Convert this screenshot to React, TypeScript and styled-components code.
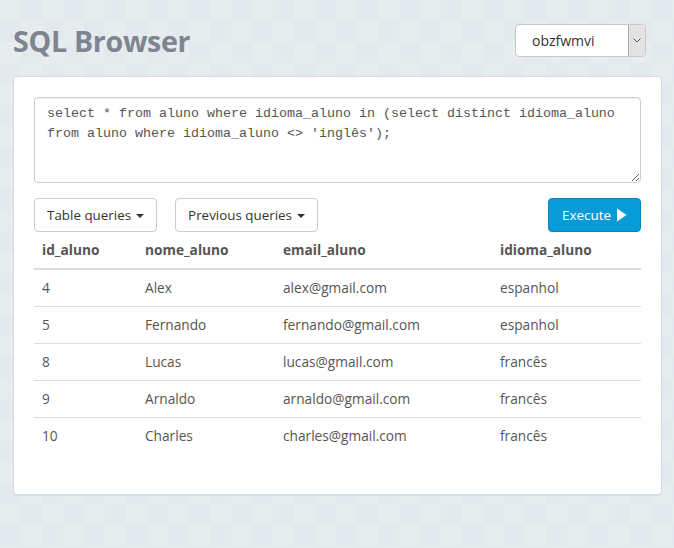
import React from "react";
import styled, { createGlobalStyle } from "styled-components";

const GlobalStyle = createGlobalStyle`
  html, body { margin: 0; padding: 0; }
  body {
    font-family: "Open Sans", "Noto Sans", sans-serif;
    font-size: 14px;
    color: #555;
    background-color: #e5eaed;
    background-image:
      repeating-conic-gradient(#e3e9ec 0 25%, #e7ecef 0 50%);
    background-size: 42px 42px;
    min-height: 548px;
  }
  * { box-sizing: border-box; }
`;

const Page = styled.div`
  padding: 0 12px 54px 13px;
`;

const Header = styled.header`
  display: flex;
  align-items: center;
  justify-content: space-between;
  padding-top: 24px;
  height: 57px;
  margin-bottom: 19px;
  padding-right: 16px;
`;

const Title = styled.h1`
  margin: 0;
  font-size: 28.6px;
  font-weight: 700;
  color: #7e8591;
  letter-spacing: -0.3px;
  line-height: 33px;
`;

const SelectWrap = styled.div`
  position: relative;
  width: 131px;
  height: 33px;
  display: flex;
  background: #fff;
  border: 1px solid #c8c8c8;
  border-radius: 4px;
  overflow: hidden;
`;

const SelectBox = styled.select`
  appearance: none;
  flex: 1;
  border: 0;
  background: transparent;
  font-family: "Open Sans", "Noto Sans", sans-serif;
  font-size: 14px;
  color: #333;
  padding: 0 0 0 16px;
  outline: none;
`;

const SelectArrow = styled.div`
  width: 17px;
  background: #e3e3e3;
  border-left: 1px solid #aaa;
  display: flex;
  align-items: center;
  justify-content: center;
  color: #555;
`;

const Panel = styled.main`
  background: #fff;
  border: 1px solid #d6dee4;
  border-radius: 4px;
  box-shadow: 0 1px 1px rgba(60, 90, 120, 0.08);
  padding: 20px 20px 40px;
`;

const QueryInput = styled.textarea`
  display: block;
  width: 100%;
  height: 86px;
  border: 1px solid #ccc;
  border-radius: 4px;
  padding: 6px 12px;
  font-family: "Liberation Mono", "DejaVu Sans Mono", monospace;
  font-size: 13.33px;
  line-height: 20px;
  color: #555;
  box-shadow: inset 0 1px 1px rgba(0, 0, 0, 0.05);
  outline: none;
  resize: both;
`;

const Toolbar = styled.div`
  display: flex;
  align-items: center;
  gap: 18px;
  margin-top: 15px;
`;

const Button = styled.button<{ $primary?: boolean }>`
  height: 34px;
  display: inline-flex;
  align-items: center;
  gap: 5px;
  padding: 0 ${(p) => (p.$primary ? "13px" : "12px")};
  font-family: "Open Sans", "Noto Sans", sans-serif;
  font-size: 13.4px;
  border-radius: 4px;
  cursor: pointer;
  border: 1px solid ${(p) => (p.$primary ? "#0a86bd" : "#ccc")};
  background: ${(p) => (p.$primary ? "#079cd8" : "#fff")};
  color: ${(p) => (p.$primary ? "#fff" : "#333")};
  margin-left: ${(p) => (p.$primary ? "auto" : "0")};
`;

const Caret = styled.span`
  display: inline-block;
  width: 0;
  height: 0;
  border-top: 4px solid #333;
  border-left: 4px solid transparent;
  border-right: 4px solid transparent;
  margin-top: 1px;
`;

const Table = styled.table`
  width: 100%;
  border-collapse: collapse;
  font-size: 13.7px;
`;

const Th = styled.th<{ $w: number }>`
  width: ${(p) => p.$w}px;
  text-align: left;
  font-weight: 700;
  color: #555;
  padding: 8px;
  line-height: 20px;
  border-bottom: 2px solid #ddd;
`;

const Td = styled.td`
  padding: 8px;
  line-height: 20px;
  border-top: 1px solid #ddd;
  color: #555;
`;

const rows = [
  ["4", "Alex", "alex@gmail.com", "espanhol"],
  ["5", "Fernando", "fernando@gmail.com", "espanhol"],
  ["8", "Lucas", "lucas@gmail.com", "francês"],
  ["9", "Arnaldo", "arnaldo@gmail.com", "francês"],
  ["10", "Charles", "charles@gmail.com", "francês"],
];

const cols: [string, number][] = [
  ["id_aluno", 103],
  ["nome_aluno", 138],
  ["email_aluno", 217],
  ["idioma_aluno", 149],
];

export default function App() {
  return (
    <>
      <GlobalStyle />
      <Page>
        <Header>
          <Title>SQL Browser</Title>
          <SelectWrap>
            <SelectBox defaultValue="obzfwmvi">
              <option value="obzfwmvi">obzfwmvi</option>
            </SelectBox>
            <SelectArrow>
              <svg width="8" height="5" viewBox="0 0 8 5">
                <path d="M0.5 0.5 L4 4 L7.5 0.5" fill="none" stroke="#555" strokeWidth="1" />
              </svg>
            </SelectArrow>
          </SelectWrap>
        </Header>
        <Panel>
          <QueryInput
            spellCheck={false}
            defaultValue={"select * from aluno where idioma_aluno in (select distinct idioma_aluno from aluno where idioma_aluno <> 'inglês');"}
          />
          <Toolbar>
            <Button>
              Table queries <Caret />
            </Button>
            <Button>
              Previous queries <Caret />
            </Button>
            <Button $primary>
              Execute
              <svg width="11" height="14" viewBox="0 0 11 14">
                <path d="M1 0.5 L10.5 7 L1 13.5 Z" fill="#fff" />
              </svg>
            </Button>
          </Toolbar>
          <Table>
            <thead>
              <tr>
                {cols.map(([c, w]) => (
                  <Th key={c} $w={w}>
                    {c}
                  </Th>
                ))}
              </tr>
            </thead>
            <tbody>
              {rows.map((r) => (
                <tr key={r[0]}>
                  {r.map((v, i) => (
                    <Td key={i}>{v}</Td>
                  ))}
                </tr>
              ))}
            </tbody>
          </Table>
        </Panel>
      </Page>
    </>
  );
}
